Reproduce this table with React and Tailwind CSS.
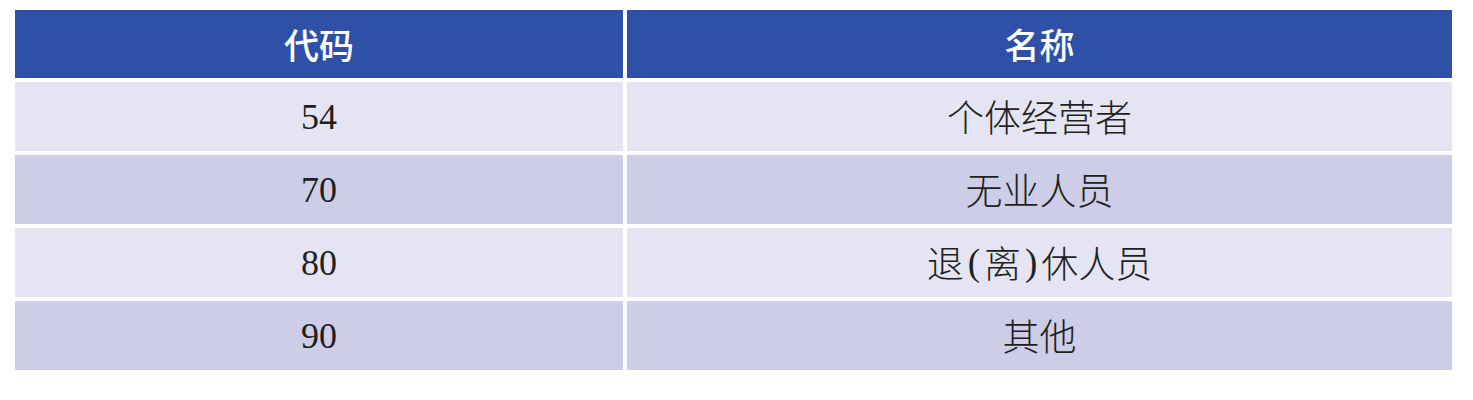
const rows = [
  { code: "54", name: "个体经营者" },
  { code: "70", name: "无业人员" },
  { code: "80", name: ["退", "(", "离", ")", "休人员"] },
  { code: "90", name: "其他" },
];

function Name({ value }) {
  if (typeof value === "string") return value;
  return value.map((part, i) =>
    part === "(" || part === ")" ? (
      <span key={i} className="mx-[4px] font-['Liberation_Serif',serif]">
        {part}
      </span>
    ) : (
      <span key={i}>{part}</span>
    )
  );
}

export default function App() {
  return (
    <div className="w-[1473px] h-[400px] bg-white pt-[10px] pl-[15px]">
      <div className="w-[1437px] flex flex-col gap-[4px]">
        <div className="flex gap-[4px] h-[68px] text-white text-[35px] font-medium font-['Noto_Sans_CJK_SC',sans-serif]">
          <div className="w-[608px] bg-[#2e50a7] flex items-center justify-center">代码</div>
          <div className="flex-1 bg-[#2e50a7] flex items-center justify-center">名称</div>
        </div>
        {rows.map((r, i) => (
          <div key={r.code} className="flex gap-[4px] h-[69px] text-[#231f20]">
            <div
              className={`w-[608px] flex items-center justify-center text-[36px] font-['Liberation_Serif',serif] ${
                i % 2 === 0 ? "bg-[#e4e4f2]" : "bg-[#cdcde8]"
              }`}
            >
              {r.code}
            </div>
            <div
              className={`flex-1 flex items-center justify-center text-[37px] font-light font-['Noto_Sans_CJK_SC',serif] ${
                i % 2 === 0 ? "bg-[#e4e4f2]" : "bg-[#cdcde8]"
              }`}
            >
              <Name value={r.name} />
            </div>
          </div>
        ))}
      </div>
    </div>
  );
}
